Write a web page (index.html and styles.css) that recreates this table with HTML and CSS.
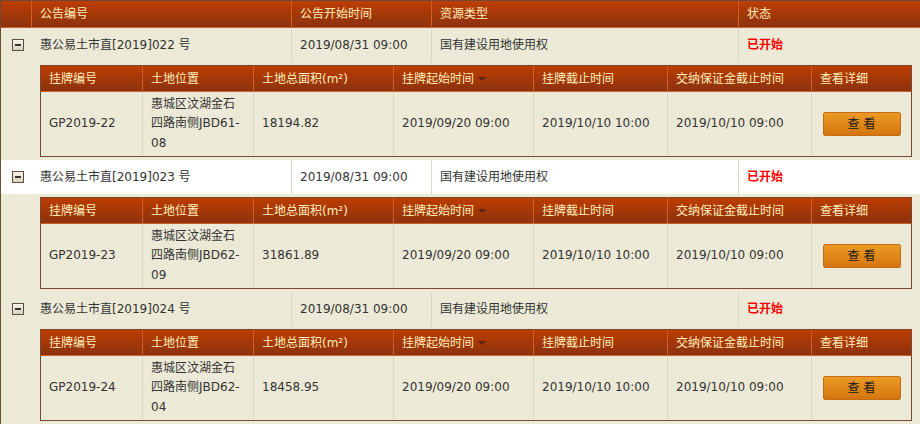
FILE: index.html
```html
<!DOCTYPE html>
<html lang="zh-CN">
<head>
<meta charset="utf-8">
<title>公告列表</title>
<link rel="stylesheet" href="styles.css">
</head>
<body>
<table class="notices">
  <thead>
    <tr>
      <th class="w-ico"></th>
      <th class="w-no">公告编号</th>
      <th class="w-date">公告开始时间</th>
      <th class="w-type">资源类型</th>
      <th class="w-state">状态</th>
    </tr>
  </thead>
  <tbody>
    <tr class="notice">
      <td class="ico"><span class="toggle"></span></td>
      <td class="sep">惠公易土市直[2019]022 号</td>
      <td class="sep">2019/08/31 09:00</td>
      <td class="sep">国有建设用地使用权</td>
      <td class="state">已开始</td>
    </tr>
    <tr class="detail">
      <td colspan="5">
        <table class="lots">
          <thead>
            <tr>
              <th class="l1">挂牌编号</th>
              <th class="l2">土地位置</th>
              <th class="l3">土地总面积(m²)</th>
              <th class="l4">挂牌起始时间<span class="sort"></span></th>
              <th class="l5">挂牌截止时间</th>
              <th class="l6">交纳保证金截止时间</th>
              <th class="l7">查看详细</th>
            </tr>
          </thead>
          <tbody>
            <tr>
              <td>GP2019-22</td>
              <td>惠城区汶湖金石<br>四路南侧JBD61-<br>08</td>
              <td>18194.82</td>
              <td>2019/09/20 09:00</td>
              <td>2019/10/10 10:00</td>
              <td>2019/10/10 09:00</td>
              <td class="act"><button class="view" type="button">查 看</button></td>
            </tr>
          </tbody>
        </table>
      </td>
    </tr>
    <tr class="notice hover">
      <td class="ico"><span class="toggle"></span></td>
      <td class="sep">惠公易土市直[2019]023 号</td>
      <td class="sep">2019/08/31 09:00</td>
      <td class="sep">国有建设用地使用权</td>
      <td class="state">已开始</td>
    </tr>
    <tr class="detail">
      <td colspan="5">
        <table class="lots">
          <thead>
            <tr>
              <th class="l1">挂牌编号</th>
              <th class="l2">土地位置</th>
              <th class="l3">土地总面积(m²)</th>
              <th class="l4">挂牌起始时间<span class="sort"></span></th>
              <th class="l5">挂牌截止时间</th>
              <th class="l6">交纳保证金截止时间</th>
              <th class="l7">查看详细</th>
            </tr>
          </thead>
          <tbody>
            <tr>
              <td>GP2019-23</td>
              <td>惠城区汶湖金石<br>四路南侧JBD62-<br>09</td>
              <td>31861.89</td>
              <td>2019/09/20 09:00</td>
              <td>2019/10/10 10:00</td>
              <td>2019/10/10 09:00</td>
              <td class="act"><button class="view" type="button">查 看</button></td>
            </tr>
          </tbody>
        </table>
      </td>
    </tr>
    <tr class="notice">
      <td class="ico"><span class="toggle"></span></td>
      <td class="sep">惠公易土市直[2019]024 号</td>
      <td class="sep">2019/08/31 09:00</td>
      <td class="sep">国有建设用地使用权</td>
      <td class="state">已开始</td>
    </tr>
    <tr class="detail">
      <td colspan="5">
        <table class="lots">
          <thead>
            <tr>
              <th class="l1">挂牌编号</th>
              <th class="l2">土地位置</th>
              <th class="l3">土地总面积(m²)</th>
              <th class="l4">挂牌起始时间<span class="sort"></span></th>
              <th class="l5">挂牌截止时间</th>
              <th class="l6">交纳保证金截止时间</th>
              <th class="l7">查看详细</th>
            </tr>
          </thead>
          <tbody>
            <tr>
              <td>GP2019-24</td>
              <td>惠城区汶湖金石<br>四路南侧JBD62-<br>04</td>
              <td>18458.95</td>
              <td>2019/09/20 09:00</td>
              <td>2019/10/10 10:00</td>
              <td>2019/10/10 09:00</td>
              <td class="act"><button class="view" type="button">查 看</button></td>
            </tr>
          </tbody>
        </table>
      </td>
    </tr>
  </tbody>
</table>
</body>
</html>
```

FILE: styles.css
```css
* { box-sizing: border-box; }

html, body {
  margin: 0;
  padding: 0;
  background: #ecead7;
}

body {
  font-family: "DejaVu Sans", "Noto Sans CJK SC", sans-serif;
  font-size: 12px;
  color: #333;
  overflow: hidden;
}

table {
  border-collapse: separate;
  border-spacing: 0;
  table-layout: fixed;
}

.notices {
  width: 920px;
  border-left: 1px solid #6e4a33;
  border-top: 1px solid #6e4a33;
}

.notices > thead th,
.lots > thead th {
  background: linear-gradient(#bd3d01, #8c3210);
  color: #ffeebb;
  font-weight: normal;
  text-align: left;
  white-space: nowrap;
  padding: 0 0 0 8px;
  border-right: 1px solid #cf5f25;
  border-bottom: 1px solid #cf5f25;
  line-height: 16px;
}

.notices > thead th { height: 27px; }

.w-ico { width: 31px; }
.w-no { width: 260px; }
.w-date { width: 140px; }
.w-type { width: 307px; }
.notices > thead th.w-state { border-right: 0; }

.notice > td {
  height: 34px;
  padding: 0 0 0 8px;
  line-height: 16px;
  white-space: nowrap;
  vertical-align: middle;
}

.notice > td.sep { border-right: 1px solid #d9d7c8; }

.notice.hover > td { background: #fff; }

.notice > td.ico { padding: 0 0 0 11px; }

.toggle {
  display: block;
  position: relative;
  width: 12px;
  height: 12px;
  border: 1px solid #5e4d3d;
  background: linear-gradient(#f6f4ea, #d6d1bf);
}

.toggle::after {
  content: "";
  position: absolute;
  left: 2px;
  top: 4px;
  width: 6px;
  height: 2px;
  background: #3c3228;
}

.state {
  color: #f00;
  font-weight: bold;
}

.detail > td {
  padding: 3px 8px 3px 39px;
}

.lots {
  width: 100%;
  border: 1px solid #7a4a31;
}

.lots > thead th { height: 26px; padding-left: 8px; }

.l1 { width: 102px; }
.l2 { width: 111px; }
.l3 { width: 140px; }
.l4 { width: 140px; }
.l5 { width: 134px; }
.l6 { width: 144px; }
.lots > thead th.l7 { border-right: 0; }

.sort {
  display: inline-block;
  vertical-align: middle;
  margin-left: 4px;
  width: 0;
  height: 0;
  border-left: 4px solid transparent;
  border-right: 4px solid transparent;
  border-top: 4px solid #5a2612;
}

.lots > tbody td {
  height: 64px;
  padding: 0 0 0 8px;
  line-height: 19.5px;
  vertical-align: middle;
  border-right: 1px solid #d9d7c8;
  white-space: nowrap;
}

.lots > tbody td.act {
  border-right: 0;
  padding: 0;
  text-align: center;
}

.view {
  width: 78px;
  height: 24px;
  margin: 0;
  padding: 0;
  border: 1px solid #c76a16;
  border-radius: 2px;
  background: linear-gradient(#eb9a25, #d4750f);
  font-family: "DejaVu Sans", "Noto Sans CJK SC", sans-serif;
  font-size: 12px;
  color: #1a1a1a;
  line-height: 22px;
  cursor: pointer;
}
```
